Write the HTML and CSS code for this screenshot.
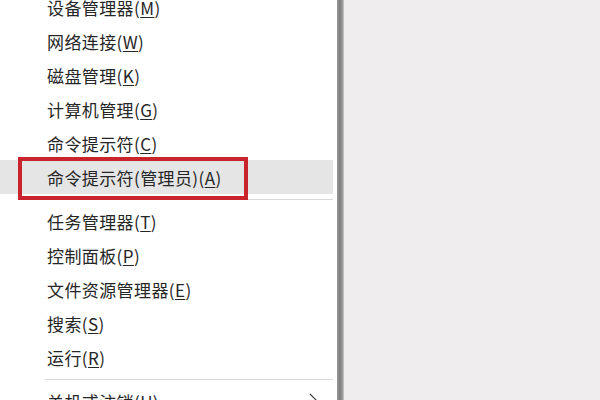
FILE: index.html
```html
<!DOCTYPE html>
<html lang="zh-CN">
<head>
<meta charset="utf-8">
<link rel="stylesheet" href="styles.css">
</head>
<body>
<div class="menu">
  <ul class="list">
    <li class="item">设备管理器(<u>M</u>)</li>
    <li class="item">网络连接(<u>W</u>)</li>
    <li class="item">磁盘管理(<u>K</u>)</li>
    <li class="item">计算机管理(<u>G</u>)</li>
    <li class="item">命令提示符(<u>C</u>)</li>
    <li class="item active">命令提示符(管理员)(<u>A</u>)<span class="mark"></span></li>
    <li class="sep"></li>
    <li class="item">任务管理器(<u>T</u>)</li>
    <li class="item">控制面板(<u>P</u>)</li>
    <li class="item">文件资源管理器(<u>E</u>)</li>
    <li class="item">搜索(<u>S</u>)</li>
    <li class="item">运行(<u>R</u>)</li>
    <li class="sep"></li>
    <li class="item sub"><span>关机或注销(<u>U</u>)</span><svg class="chev" width="10" height="16" viewBox="0 0 10 16"><path d="M1 1 L8 8 L1 15" fill="none" stroke="#444" stroke-width="1.2"/></svg></li>
  </ul>
</div>
<div class="edge"></div>
<div class="desk"></div>
</body>
</html>
```

FILE: styles.css
```css
html, body {
  margin: 0;
  padding: 0;
}
body {
  width: 600px;
  height: 400px;
  overflow: hidden;
  display: flex;
  background: #efedee;
  font-family: "Noto Sans CJK SC", "Microsoft YaHei", sans-serif;
  color: #262626;
}
.menu {
  width: 337px;
  flex: none;
  background: #ffffff;
  overflow: hidden;
}
.list {
  list-style: none;
  margin: -10px 0 0 0;
  padding: 0 4px 0 0;
}
.item {
  position: relative;
  height: 34px;
  display: flex;
  align-items: center;
  padding-left: 47px;
  font-size: 17px;
  letter-spacing: 0.4px;
  white-space: nowrap;
}
.item u {
  text-decoration: underline;
  text-underline-offset: 2px;
  text-decoration-thickness: 1px;
}
.active {
  background: #e5e5e5;
}
.mark {
  position: absolute;
  left: 18px;
  top: -3px;
  width: 222px;
  height: 35px;
  border: 4px solid #c9232b;
}
.sep {
  height: 10px;
  margin-left: 45px;
  display: flex;
  align-items: center;
}
.sep::before {
  content: "";
  flex: 1;
  height: 1px;
  background: #d9d9d9;
}
.sub {
  justify-content: space-between;
  padding-right: 14px;
}
.chev {
  display: block;
}
.edge {
  width: 7px;
  flex: none;
  background: linear-gradient(to right, #9a9a9a, #7f7f7f 40%, #9c9c9c 80%, #cfcfcf);
}
.desk {
  flex: 1;
  background: #efedee;
}
```
